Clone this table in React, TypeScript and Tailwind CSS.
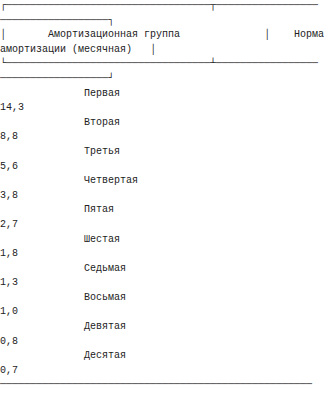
const rule = (n: number) => '─'.repeat(n)

const groups = [
  ['Первая', '14,3'],
  ['Вторая', '8,8'],
  ['Третья', '5,6'],
  ['Четвертая', '3,8'],
  ['Пятая', '2,7'],
  ['Шестая', '1,8'],
  ['Седьмая', '1,3'],
  ['Восьмая', '1,0'],
  ['Девятая', '0,8'],
  ['Десятая', '0,7'],
]

const indent = ' '.repeat(14)

const lines: string[] = [
  '┌' + rule(34) + '┬' + rule(17),
  rule(18) + '┐',
  '│       Амортизационная группа              │    Норма',
  'амортизации (месячная)   │',
  '└' + rule(34) + '┴' + rule(17),
  rule(18) + '┘',
  ...groups.flatMap(([name, rate]) => [indent + name, rate]),
  rule(52),
]

export default function App() {
  return (
    <div className="w-[324px] h-[394px] overflow-hidden bg-white">
      <pre className="-mt-px font-['Liberation_Mono',monospace] text-[10px] leading-[14.6px] text-[#222] whitespace-pre">
        {lines.map((line, i) => (
          <div key={i}>{line}</div>
        ))}
      </pre>
    </div>
  )
}
